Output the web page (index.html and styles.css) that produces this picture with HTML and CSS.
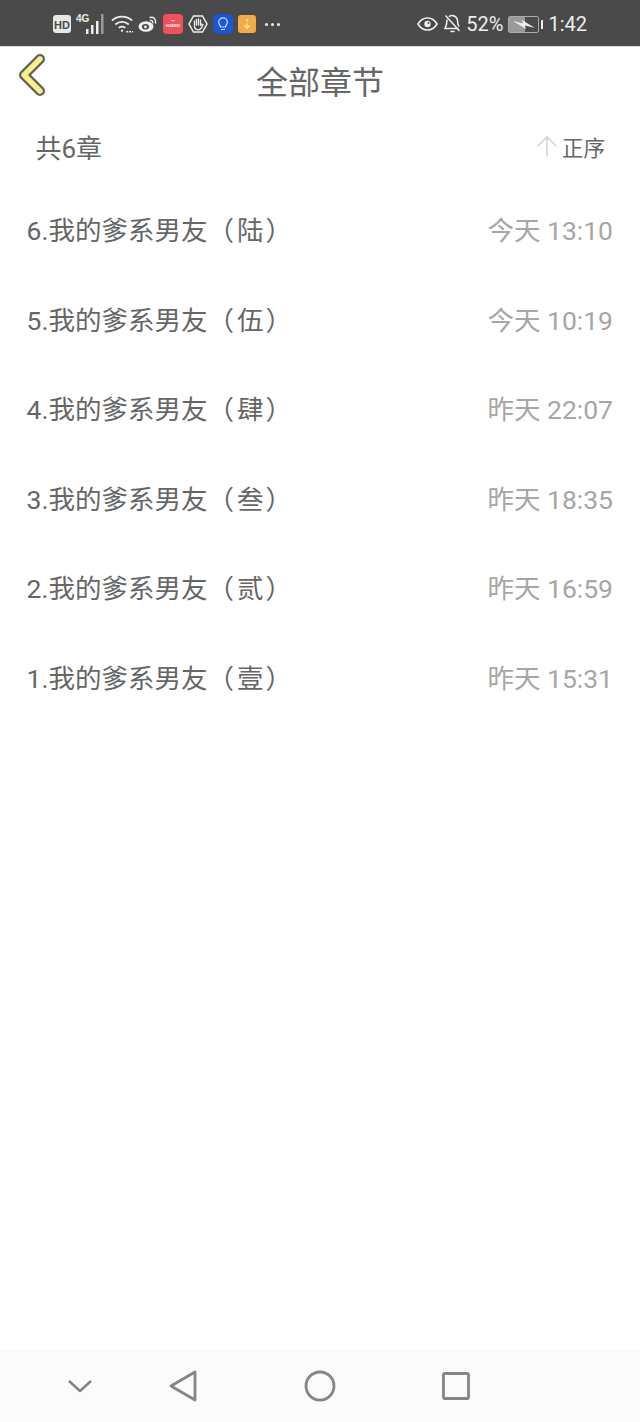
FILE: index.html
```html
<!DOCTYPE html>
<html lang="zh-CN">
<head>
    <meta charset="UTF-8">
    <meta name="viewport" content="width=device-width, initial-scale=1.0">
    <title>全部章节</title>
    <link rel="stylesheet" href="styles.css">
</head>
<body>
    <div class="phone">
        <div class="status-bar">
            <div class="status-left">
                <svg width="18" height="18" viewBox="0 0 18 18"><rect width="18" height="18" rx="3" fill="#e6e6e6"/><text x="9" y="13.5" text-anchor="middle" class="hd-text">HD</text></svg>
                <svg width="30" height="22" viewBox="0 0 30 22"><text x="0" y="9" class="g-text">4G</text><rect x="10" y="16" width="2.5" height="5" fill="#eee"/><rect x="15" y="12" width="2.5" height="9" fill="#eee"/><rect x="20" y="8" width="2.5" height="13" fill="#eee"/><rect x="25" y="1" width="2.5" height="20" fill="#999"/></svg>
                <svg class="ic-wifi" width="23" height="20" viewBox="0 0 24 20" fill="none" stroke="#eee" stroke-width="1.8"><path d="M1 6.5C7 1 16 1 22 6.5"/><path d="M4.5 10.5C8.5 7 14.5 7 18.5 10.5"/><path d="M8 14C10 12.5 13 12.5 15 14"/><circle cx="11.5" cy="17" r="1.2" fill="#eee" stroke="none"/><path d="M16 18h7" stroke-width="1.5" stroke-dasharray="2 1"/></svg>
                <svg width="20" height="18" viewBox="0 0 20 18"><ellipse cx="8" cy="11.5" rx="7.5" ry="5.2" fill="#eee"/><ellipse cx="7.5" cy="11.8" rx="3.6" ry="2.8" fill="#4a4a4a"/><circle cx="7.5" cy="12" r="1.4" fill="#eee"/><path d="M12 2.5c3.5-1 6.5 2 5.5 5.5M12.5 5.5c1.5-.4 2.7.8 2.3 2.3" fill="none" stroke="#eee" stroke-width="1.4" stroke-linecap="round"/></svg>
                <svg width="20" height="20" viewBox="0 0 20 20"><rect width="20" height="20" rx="4" fill="#f0505a"/><path d="M8 6c1 1.2 3 1.2 4 0" fill="none" stroke="#fff" stroke-width=".8"/><text x="10" y="12.5" text-anchor="middle" class="hw-text">HUAWEI</text></svg>
                <svg width="20" height="20" viewBox="0 0 20 20"><path d="M5.5 2h9L19 10l-4.500 8h-9L1 10z" fill="none" stroke="#eee" stroke-width="1.5"/><path d="M6.500 8v5c.6 2 2 2.800 3.800 2.800 2 0 3-1.300 3.700-3l1-2.300-1.500-.5-1 1.500V6M10.500 11V4.800M8.500 11V5.300M6.500 11V7" fill="none" stroke="#eee" stroke-width="1.3" stroke-linecap="round" stroke-linejoin="round"/></svg>
                <svg width="20" height="20" viewBox="0 0 20 20"><rect width="20" height="20" rx="5" fill="#1a56d6"/><path d="M7.500 13c0-1.500-1.800-2.500-1.800-4.800a4.300 4.300 0 0 1 8.600 0c0 2.300-1.800 3.300-1.800 4.800zM8 15.500h4" fill="none" stroke="#cfe0ff" stroke-width="1.2"/></svg>
                <svg width="18" height="18" viewBox="0 0 18 18"><rect width="18" height="18" rx="3" fill="#f5ab45"/><path d="M9 4v3M9 8.500v2M7 11l2 2.500 2-2.500z" stroke="#fbe0a8" stroke-width="1.4" fill="#fbe0a8"/></svg>
                <span class="more-dots"><i></i><i></i><i></i></span>
            </div>
            <div class="status-right">
                <svg width="21" height="16" viewBox="0 0 21 16" fill="none" stroke="#eee" stroke-width="1.6"><path d="M1 8c4.500-8 14.500-8 19 0-4.500 8-14.500 8-19 0z"/><circle cx="10.500" cy="8" r="3.200" fill="#eee" stroke="none"/><circle cx="11.500" cy="7" r="1" fill="#4a4a4a" stroke="none"/></svg>
                <svg class="ic-bell" width="17" height="20" viewBox="0 0 17 20" fill="none" stroke="#eee" stroke-width="1.5"><path d="M3 5.500C3 8 3 11 1 14.500h13.500M5 2.800C8 .2 13 2 13.500 6.500c0 2 .3 4 1.500 6"/><path d="M1.500 1.500l14 15.500"/><path d="M7 17.500h3" stroke-linecap="round"/></svg>
                <span class="battery-pct">52%</span>
                <div class="battery">
                    <div class="battery-body">
                        <div class="battery-fill"></div>
                        <svg class="bolt" width="24" height="11" viewBox="0 0 24 11"><path d="M1 2l10 2.500-1-3.500 13 8-10-2.500 1 3.500z" fill="#eee"/></svg>
                    </div>
                    <div class="battery-cap"></div>
                </div>
                <span class="clock">1:42</span>
            </div>
        </div>

        <div class="title-bar">
            <svg class="back-icon" width="30" height="48" viewBox="0 0 30 48"><path d="M23 8L7 24l16 16" fill="none" stroke="#5f5f55" stroke-width="10" stroke-linecap="round" stroke-linejoin="round"/><path d="M23 8L7 24l16 16" fill="none" stroke="#f7f08a" stroke-width="5.5" stroke-linecap="round" stroke-linejoin="round"/></svg>
            <h1>全部章节</h1>
        </div>

        <div class="summary">
            <span class="total">共6章</span>
            <span class="sort">
                <svg width="22" height="22" viewBox="0 0 22 22" fill="none" stroke="#d4d4d4" stroke-width="1.6"><path d="M11 21V2M1.500 11.500L11 2l9.500 9.500"/></svg>
                正序
            </span>
        </div>

        <ul class="chapter-list">
            <li><span class="chapter-name">6.我的爹系男友<span class="paren-open">（</span>陆<span class="paren-close">）</span></span><span class="chapter-time">今天 13:10</span></li>
            <li><span class="chapter-name">5.我的爹系男友<span class="paren-open">（</span>伍<span class="paren-close">）</span></span><span class="chapter-time">今天 10:19</span></li>
            <li><span class="chapter-name">4.我的爹系男友<span class="paren-open">（</span>肆<span class="paren-close">）</span></span><span class="chapter-time">昨天 22:07</span></li>
            <li><span class="chapter-name">3.我的爹系男友<span class="paren-open">（</span>叁<span class="paren-close">）</span></span><span class="chapter-time">昨天 18:35</span></li>
            <li><span class="chapter-name">2.我的爹系男友<span class="paren-open">（</span>贰<span class="paren-close">）</span></span><span class="chapter-time">昨天 16:59</span></li>
            <li><span class="chapter-name">1.我的爹系男友<span class="paren-open">（</span>壹<span class="paren-close">）</span></span><span class="chapter-time">昨天 15:31</span></li>
        </ul>

        <div class="nav-bar">
            <svg width="26" height="16" viewBox="0 0 26 16" fill="none" stroke="#858585" stroke-width="2.6" stroke-linejoin="round"><path d="M2 3l11 10L24 3"/></svg>
            <div class="nav-keys">
                <svg width="28" height="32" viewBox="0 0 28 32" fill="none" stroke="#858585" stroke-width="2.8" stroke-linejoin="round"><path d="M2 16L26 2v28z"/></svg>
                <svg width="32" height="32" viewBox="0 0 32 32" fill="none" stroke="#858585" stroke-width="2.8"><circle cx="16" cy="16" r="14"/></svg>
                <svg width="28" height="28" viewBox="0 0 28 28" fill="none" stroke="#858585" stroke-width="2.8" stroke-linejoin="round"><rect x="1.500" y="1.500" width="25" height="25" rx="1"/></svg>
            </div>
        </div>
    </div>
</body>
</html>
```

FILE: styles.css
```css
html, body {
    margin: 0;
    padding: 0;
}
body {
    font-family: Roboto, "Noto Sans CJK SC", sans-serif;
    background-color: #fff;
}
.phone {
    width: 640px;
    height: 1422px;
    display: flex;
    flex-direction: column;
    overflow: hidden;
}

/* status bar */
.status-bar {
    height: 47px;
    flex: none;
    display: flex;
    justify-content: space-between;
    align-items: center;
    padding: 2px 53px 0;
    box-sizing: border-box;
    background-color: #4a4a4a;
    color: #eee;
    border-bottom: 1px solid #d8d8d8;
}
.status-left {
    display: flex;
    align-items: center;
    gap: 5px;
}
.status-right {
    display: flex;
    align-items: center;
    gap: 5px;
}
.ic-wifi {
    margin-right: -1px;
}
.ic-bell {
    margin-left: 1px;
}
.hd-text {
    font: 700 11px "Liberation Sans", sans-serif;
    fill: #4a4a4a;
}
.g-text {
    font: 700 10px "Liberation Sans", sans-serif;
    fill: #eee;
}
.hw-text {
    font: 700 3.5px "Liberation Sans", sans-serif;
    fill: #fff;
}
.more-dots {
    display: flex;
    gap: 3px;
    margin-left: 4px;
}
.more-dots i {
    width: 3px;
    height: 3px;
    border-radius: 50%;
    background-color: #eee;
}
.battery-pct,
.clock {
    font-size: 20px;
    color: #eee;
}
.battery {
    display: flex;
    align-items: center;
    gap: 2px;
}
.battery-body {
    position: relative;
    width: 29px;
    height: 15px;
    border: 1px solid #aaa;
    border-radius: 2px;
    overflow: hidden;
}
.battery-fill {
    width: 52%;
    height: 100%;
    background-color: #9a9a9a;
}
.bolt {
    position: absolute;
    left: 3px;
    top: 2px;
}
.battery-cap {
    width: 2px;
    height: 9px;
    background-color: #eee;
}

/* header */
.title-bar {
    position: relative;
    height: 66px;
    flex: none;
    display: flex;
    justify-content: center;
    align-items: center;
}
.title-bar h1 {
    margin: 0;
    font-size: 32px;
    font-weight: 400;
    color: #666;
}
.back-icon {
    position: absolute;
    left: 17px;
    top: 4px;
}

.summary {
    height: 66px;
    flex: none;
    display: flex;
    justify-content: space-between;
    align-items: center;
    padding: 0 35px 0 35.5px;
}
.total {
    font-size: 26px;
    color: #666;
}
.sort {
    display: flex;
    align-items: center;
    gap: 4px;
    font-size: 21.5px;
    color: #666;
}

.chapter-list {
    list-style: none;
    margin: 0;
    padding: 5px 27px 0 26.5px;
}
.chapter-list li {
    height: 89.5px;
    display: flex;
    justify-content: space-between;
    align-items: center;
}
.chapter-name {
    font-size: 26.5px;
    color: #666;
}
.paren-open {
    margin-right: 3px;
}
.paren-close {
    margin-left: 2px;
}
.chapter-time {
    font-size: 26.5px;
    color: #a6a6a6;
}

/* bottom nav */
.nav-bar {
    margin-top: auto;
    height: 72px;
    flex: none;
    display: flex;
    align-items: center;
    padding-left: 67px;
    gap: 76px;
    background-color: #fbfbfb;
}
.nav-keys {
    display: flex;
    align-items: center;
    gap: 106.5px;
}
```
